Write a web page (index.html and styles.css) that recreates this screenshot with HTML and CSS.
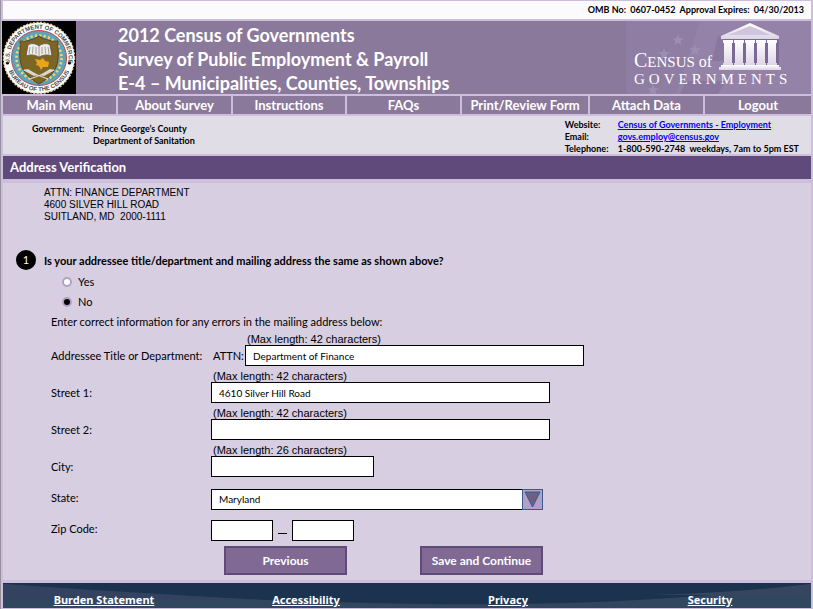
FILE: index.html
```html
<!DOCTYPE html>
<html lang="en">
<head>
<meta charset="utf-8">
<title>Address Verification</title>
<link rel="stylesheet" href="styles.css">
</head>
<body>
<div class="page">
  <div class="omb">OMB No:&nbsp; 0607-0452&nbsp; Approval Expires:&nbsp; 04/30/2013</div>

  <header class="banner">
    <svg class="seal" viewBox="0 0 74 73" role="img" aria-label="Bureau of the Census seal">
      <defs>
        <path id="arc-top" d="M8.500 45A29.500 29.500 0 1 1 65.500 45"/>
        <path id="arc-bottom" d="M5.500 47A33 33 0 0 0 68.500 47"/>
      </defs>
      <rect width="74" height="73" fill="#000"/>
      <circle cx="37" cy="37" r="35.500" fill="#fff" stroke="#e8cf9a" stroke-width="1.500" stroke-dasharray="2 1.500"/>
      <circle cx="37" cy="37" r="27.500" fill="#5fa3ba" stroke="#b5484f" stroke-width="1"/>
      <circle cx="37" cy="37" r="22.500" fill="none" stroke="#f0d56a" stroke-width="2.600" stroke-dasharray="2.200 2.200"/>
      <path d="M18 20q6 1 10-1 5-1 9-4 4 3 9 4 4 2 10 1c-1 6 1 11 0 18-1 12-9 19-19 25-10-6-18-13-19-25-1-7 1-12 0-18z" fill="#7d6526" stroke="#5b4716" stroke-width="1"/>
      <path d="M37 25c-4-3-8-3-11-1l-2 11c5-2 9-1 13 1 4-2 8-3 13-1l-2-11c-3-2-7-2-11 1z" fill="#eeede9" stroke="#55513f" stroke-width=".8"/>
      <path d="M37 25v11M28 26l-1 7M31 25.500l-.5 7M34 26v7M40 26v7M43 25.500l.5 7M46 26l1 7" stroke="#8f8b80" stroke-width=".8"/>
      <path d="M33 38l5 1 3-2 2 3 4 1-1 5-5 0-2 3-2-4-3-1 1-2z" fill="#e8a51c"/>
      <path d="M21 49l5-1 10 6-4 1zM53 49l-5-1-10 6 4 1z" fill="#d9d8d0"/>
      <path d="M22 49l24 9M52 49l-24 9" stroke="#d9d8d0" stroke-width="1.200" fill="none"/>
      <circle cx="5.500" cy="42" r="1.600"/><circle cx="67.500" cy="42" r="1.600"/>
      <text class="seal-text"><textPath href="#arc-top" startOffset="50%" text-anchor="middle">U.S. DEPARTMENT OF COMMERCE</textPath></text>
      <text class="seal-text"><textPath href="#arc-bottom" startOffset="50%" text-anchor="middle">BUREAU OF THE CENSUS</textPath></text>
    </svg>
    <h1 class="title">2012 Census of Governments<br>Survey of Public Employment &amp; Payroll<br>E-4 – Municipalities, Counties, Townships</h1>
    <svg class="logo" viewBox="0 0 185 73" role="img" aria-label="Census of Governments">
      <defs>
        <linearGradient id="stone" x2="0" y2="1"><stop offset="0" stop-color="#fff"/><stop offset="1" stop-color="#dcd4e6"/></linearGradient>
        <path id="star" d="M0-6l1.500 4.200h4.500l-3.600 2.700 1.300 4.400L0 2.700l-3.700 2.600 1.300-4.400L-6-1.800h4.500z"/>
        <path id="column" d="M0 0h10v3h-1v20h1v3H0v-3h1V3H0z"/>
      </defs>
      <rect width="185" height="73" fill="#9482a8"/>
      <path d="M0 0h74L50 73H0z" fill="#8f7da4"/>
      <path d="M92 15l9 3-3 22H86zM60 60h40l-8 13H54z" fill="#8a779f"/>
      <g fill="#9e8eb2"><use href="#star" x="52" y="19"/><use href="#star" x="69" y="29"/><use href="#star" x="38" y="33"/><use href="#star" x="27" y="69"/></g>
      <path d="M98 18h55v27H98z" fill="#7c6894"/>
      <g fill="url(#stone)">
        <path d="M95 15L124 2l29 13v3H95z"/>
        <use href="#column" x="97" y="19"/><use href="#column" x="108" y="19"/><use href="#column" x="119" y="19"/><use href="#column" x="130" y="19"/><use href="#column" x="141" y="19"/>
        <path d="M95 44h58v2h2v3H93v-3h2z"/>
      </g>
      <path d="M102 14l22-9 21 9z" fill="#cfc5dc"/>
      <text class="logo-text" x="8" y="46"><tspan class="logo-cap">C</tspan>ENSUS<tspan class="logo-of"> of</tspan></text>
      <text class="logo-text logo-wide" x="8" y="63">GOVERNMENTS</text>
    </svg>
  </header>

  <nav class="menu">
    <a href="#">Main Menu</a>
    <a href="#">About Survey</a>
    <a href="#">Instructions</a>
    <a href="#">FAQs</a>
    <a href="#">Print/Review Form</a>
    <a href="#">Attach Data</a>
    <a href="#">Logout</a>
  </nav>

  <section class="info">
    <dl class="government">
      <dt>Government:</dt>
      <dd>Prince George’s County<br>Department of Sanitation</dd>
    </dl>
    <dl class="contact">
      <dt>Website:</dt><dd><a href="#">Census of Governments - Employment</a></dd>
      <dt>Email:</dt><dd><a href="#">govs.employ@census.gov</a></dd>
      <dt>Telephone:</dt><dd>1-800-590-2748&nbsp; weekdays, 7am to 5pm EST</dd>
    </dl>
  </section>

  <h2 class="section-title">Address Verification</h2>

  <main class="content">
    <address class="mailing">ATTN: FINANCE DEPARTMENT<br>4600 SILVER HILL ROAD<br>SUITLAND, MD&nbsp; 2000-1111</address>

    <form class="form">
      <fieldset class="question">
        <legend class="question-title"><span class="number">1</span>Is your addressee title/department and mailing address the same as shown above?</legend>
        <label class="choice"><input type="radio" name="same">Yes</label>
        <label class="choice"><input type="radio" name="same" checked>No</label>
      </fieldset>

      <p class="note">Enter correct information for any errors in the mailing address below:</p>

      <div class="row">
        <label for="dept">Addressee Title or Department:</label>
        <div class="control attn">
          <span class="attn-label">ATTN:</span>
          <div class="control">
            <span class="hint">(Max length: 42 characters)</span>
            <input class="box long" id="dept" type="text" maxlength="42" value="Department of Finance">
          </div>
        </div>
      </div>
      <div class="row">
        <label for="street1">Street 1:</label>
        <div class="control">
          <span class="hint">(Max length: 42 characters)</span>
          <input class="box long" id="street1" type="text" maxlength="42" value="4610 Silver Hill Road">
        </div>
      </div>
      <div class="row">
        <label for="street2">Street 2:</label>
        <div class="control">
          <span class="hint">(Max length: 42 characters)</span>
          <input class="box long" id="street2" type="text" maxlength="42">
        </div>
      </div>
      <div class="row">
        <label for="city">City:</label>
        <div class="control">
          <span class="hint">(Max length: 26 characters)</span>
          <input class="box medium" id="city" type="text" maxlength="26">
        </div>
      </div>
      <div class="row spaced">
        <label for="state">State:</label>
        <div class="select">
          <select class="box" id="state"><option>Maryland</option></select>
          <svg class="arrow" viewBox="0 0 21 21" aria-hidden="true"><rect x=".5" y=".5" width="20" height="20" fill="#b1a0c7" stroke="#385d8a"/><path d="M3 3h15L10.500 18z" fill="#6f6080" stroke="#385d8a"/></svg>
        </div>
      </div>
      <div class="row spaced">
        <label for="zip">Zip Code:</label>
        <div class="zip">
          <input class="box short" id="zip" type="text" maxlength="5">
          <span class="dash"></span>
          <input class="box short" type="text" maxlength="4" aria-label="Zip Code extension">
        </div>
      </div>

      <div class="actions">
        <button type="button">Previous</button>
        <button type="submit">Save and Continue</button>
      </div>
    </form>
  </main>

  <footer class="footer">
    <svg class="wave" viewBox="0 0 808 25" preserveAspectRatio="none" aria-hidden="true">
      <rect width="808" height="25" fill="#1c3350"/>
      <path d="M0 1Q200 18 420 21T808 1V25H0z" fill="#30475f"/>
      <path d="M0 1Q100 8 260 17H0z" fill="#33435f"/>
      <path d="M808 1Q740 9 650 12H808z" fill="#37455f"/>
    </svg>
    <a href="#">Burden Statement</a>
    <a href="#">Accessibility</a>
    <a href="#">Privacy</a>
    <a href="#">Security</a>
  </footer>
</div>
</body>
</html>
```
FILE: styles.css
```css
* {
  box-sizing: border-box;
}

body {
  margin: 0;
  font: 11px/13px Lato, "Noto Sans", sans-serif;
  color: #000;
}

.page {
  display: flex;
  flex-direction: column;
  min-height: 100vh;
  padding: 1px 2px 1px 2px;
  border-left: 1px solid #97919f;
  background: #cdbfdc;
}

.omb {
  padding-right: 7px;
  background: #fbfafd;
  font-size: 9px;
  font-weight: 700;
  line-height: 18px;
  text-align: right;
}

.banner {
  display: flex;
  margin: 2px 0 2px -1px;
  background: #8b799c;
}

.seal {
  flex: none;
  width: 74px;
  height: 73px;
}

.seal-text {
  font: 700 6px "Liberation Sans", sans-serif;
  fill: #4a4a4a;
}

.title {
  flex: 1;
  margin: 0 0 -1px 42px;
  padding-top: 2px;
  color: #fff;
  font-size: 18px;
  font-weight: 700;
  line-height: 24px;
  white-space: nowrap;
}

.logo {
  flex: none;
  width: 185px;
  height: 73px;
}

.logo-text {
  font-family: "Liberation Serif", serif;
  font-size: 15px;
  fill: #fff;
}

.logo-cap {
  font-size: 20px;
}

.logo-of {
  font-size: 16px;
}

.logo-wide {
  letter-spacing: 4px;
}

.menu {
  display: grid;
  grid-template-columns: 113fr 113fr 112fr 113fr 126fr 113fr 106fr;
  gap: 2px;
}

.menu a {
  background: #8b799c;
  color: #fff;
  font-size: 13px;
  font-weight: 700;
  line-height: 18px;
  text-align: center;
  text-decoration: none;
  white-space: nowrap;
}

.info {
  display: flex;
  justify-content: space-between;
  margin: 2px 0;
  padding: 3px 12px 0 29px;
  background: #e0dde6;
  font-size: 9px;
  font-weight: 700;
  line-height: 12px;
  white-space: nowrap;
}

.info dl {
  display: grid;
  margin: 0 0 -1px;
}

.info dd {
  margin: 0;
}

.info a {
  color: #00f;
}

.government {
  grid-template-columns: 61px auto;
  padding-top: 4px;
}

.contact {
  grid-template-columns: 53px auto;
}

.section-title {
  margin: 0 0 4px;
  padding-left: 7px;
  background: #604a7b;
  color: #fff;
  font-size: 13px;
  line-height: 23px;
}

.content {
  flex: 1;
  padding: 4px 13px 5px;
  background: #d7cee1;
}

.mailing {
  margin-left: 28px;
  font: 10px/12px "Liberation Sans", sans-serif;
}

.question {
  margin: 27px 0 0;
  padding: 0;
  border: 0;
}

.question-title {
  display: flex;
  align-items: center;
  gap: 8px;
  padding: 0;
  font-weight: 700;
}

.number {
  width: 20px;
  border-radius: 50%;
  background: #000;
  color: #fff;
  font-weight: 400;
  line-height: 20px;
  text-align: center;
}

.choice {
  display: flex;
  align-items: center;
  gap: 6px;
  width: max-content;
  margin-left: 46px;
  line-height: 20px;
}

.choice + .choice {
  margin-bottom: 3px;
}

.question-title + .choice {
  margin-top: 2px;
}

.choice input {
  appearance: none;
  width: 10px;
  height: 10px;
  margin: 0;
  border: 2px solid #b1a0c7;
  border-radius: 50%;
  background: #fff;
}

.choice input:checked {
  background: #000;
}

.note {
  margin: 0 0 5px 35px;
}

.row {
  display: grid;
  grid-template-columns: 160px 1fr;
  align-items: end;
  margin: 0 0 4px 35px;
}

.row > label,
.attn-label {
  line-height: 21px;
}

.row.spaced {
  align-items: start;
  margin-top: 12px;
  margin-bottom: 10px;
}

.row.spaced > label {
  line-height: 17px;
}

.row.spaced + .spaced {
  margin-top: 10px;
}

.control {
  display: flex;
  flex-direction: column;
}

.attn {
  flex-direction: row;
  align-items: flex-end;
}

.attn-label {
  width: 34px;
  padding-left: 2px;
}

.hint {
  padding-left: 2px;
  font: 11px/12px "Liberation Sans", sans-serif;
}

.box {
  height: 21px;
  margin: 0;
  padding: 0 7px;
  border: 1px solid #000;
  border-radius: 0;
  background: #fff;
  color: #000;
  font: 10px/19px Lato, sans-serif;
}

.long {
  width: 339px;
}

.medium {
  width: 163px;
}

.short {
  width: 62px;
}

.select {
  display: flex;
}

.select .box {
  appearance: none;
  width: 312px;
  padding-bottom: 3px;
}

.arrow {
  width: 21px;
  height: 21px;
  margin-left: -1px;
}

.zip {
  display: flex;
  gap: 5px;
}

.dash {
  width: 9px;
  height: 14px;
  border-bottom: 1px solid #000;
}

.actions {
  display: flex;
  gap: 73px;
  margin: -5px 0 0 208px;
}

.actions button {
  width: 123px;
  height: 29px;
  padding: 0;
  border: 2px solid #604a7b;
  background: #806a94;
  color: #fff;
  font: 700 12px Lato, sans-serif;
  white-space: nowrap;
}

.footer {
  display: grid;
  grid-template-columns: repeat(4, 1fr);
  position: relative;
  margin-top: 3px;
  text-align: center;
}

.wave {
  position: absolute;
  width: 100%;
  height: 100%;
}

.footer a {
  position: relative;
  padding-top: 9px;
  color: #fff;
  font: 700 11px/16px "Noto Sans", sans-serif;
}
```
